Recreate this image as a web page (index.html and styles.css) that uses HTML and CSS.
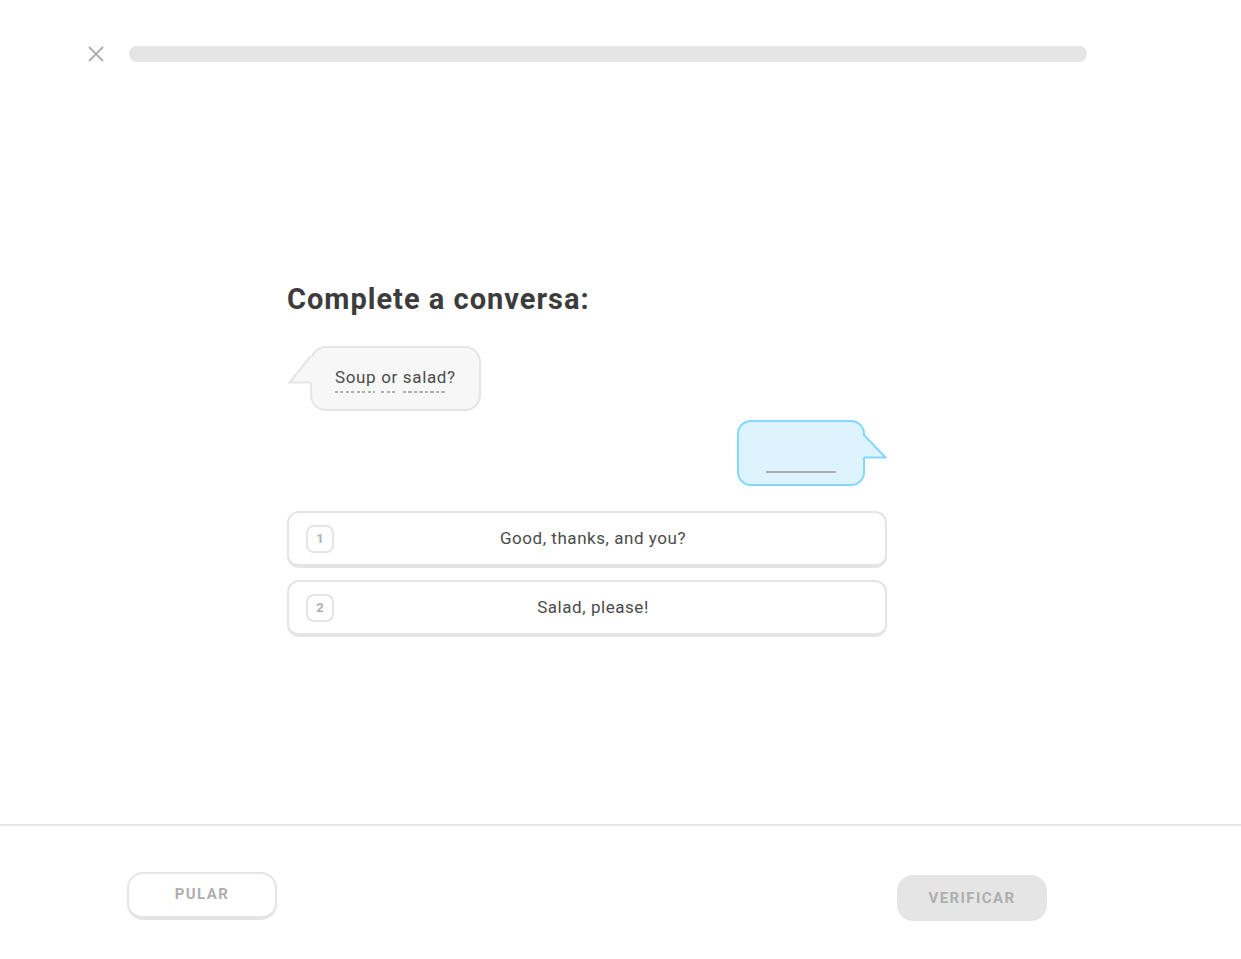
FILE: index.html
```html
<!DOCTYPE html>
<html lang="pt">
<head>
<meta charset="utf-8">
<title>Complete a conversa</title>
<link rel="stylesheet" href="styles.css">
</head>
<body>
<div class="app">
  <header class="topbar">
    <div class="frame">
      <div class="topbar-inner">
        <button class="close" aria-label="Fechar">
          <svg width="16" height="16" viewBox="0 0 16 16"><path d="M1 1L15 15M15 1L1 15" stroke="#afafaf" stroke-width="2" fill="none"/></svg>
        </button>
        <div class="progress"></div>
      </div>
    </div>
  </header>

  <main class="lesson">
    <div class="frame">
      <div class="challenge">
        <h1 class="title">Complete a conversa:</h1>

        <div class="dialog">
          <div class="row row-left">
            <div class="bubble bubble-left">
              <svg class="tail tail-left" width="26" height="30" viewBox="0 0 26 30">
                <path d="M26 2L22 2L1.5 27.5L26 27.5Z" fill="#f7f7f7"/>
                <path d="M22.5 1.5L1.5 27.5L23 27.5" fill="none" stroke="#e5e5e5" stroke-width="2"/>
              </svg>
              <span class="word">Soup</span> <span class="word">or</span> <span class="word">salad</span>?
            </div>
          </div>
          <div class="row row-right">
            <div class="bubble bubble-right">
              <span class="blank"></span>
              <svg class="tail tail-right" width="26" height="26" viewBox="0 0 26 26">
                <path d="M0 2L4 2L24.5 23.5L0 23.5Z" fill="#ddf4ff"/>
                <path d="M3.5 1.5L24.5 23.5L3 23.5" fill="none" stroke="#84d8ff" stroke-width="2"/>
              </svg>
            </div>
          </div>
        </div>

        <div class="choices">
          <div class="choice">
            <span class="key">1</span>
            <span class="choice-text">Good, thanks, and you?</span>
          </div>
          <div class="choice">
            <span class="key">2</span>
            <span class="choice-text">Salad, please!</span>
          </div>
        </div>
      </div>
    </div>
  </main>

  <footer class="footer">
    <div class="frame">
      <div class="footer-inner">
        <button class="btn btn-skip">PULAR</button>
        <button class="btn btn-check">VERIFICAR</button>
      </div>
    </div>
  </footer>
</div>
</body>
</html>
```

FILE: styles.css
```css
* {
  box-sizing: border-box;
}

html,
body {
  margin: 0;
  padding: 0;
  background: #ffffff;
}

body {
  font-family: Roboto, "Noto Sans", "Liberation Sans", sans-serif;
  color: #4b4b4b;
}

.app {
  min-height: 100vh;
  display: flex;
  flex-direction: column;
}

.frame {
  width: 1174px;
}

/* Top bar */
.topbar-inner {
  width: 1000px;
  margin: 0 auto;
  padding-top: 46px;
  display: flex;
  align-items: center;
  gap: 24px;
}

.close {
  width: 18px;
  height: 16px;
  padding: 0;
  border: 0;
  background: none;
  display: flex;
  align-items: center;
  justify-content: center;
  cursor: pointer;
}

.progress {
  flex: 1;
  height: 16px;
  border-radius: 8px;
  background: #e5e5e5;
}

/* Main lesson */
.lesson {
  flex: 1;
}

.challenge {
  width: 600px;
  margin: 0 auto;
  padding-top: 220px;
}

.title {
  margin: 0;
  font-size: 29px;
  line-height: 34px;
  font-weight: 700;
  letter-spacing: 1px;
  color: #3c3c3c;
}

.dialog {
  margin-top: 30px;
  display: flex;
  flex-direction: column;
  gap: 9px;
}

.row {
  display: flex;
}

.row-left {
  justify-content: flex-start;
  padding-left: 23px;
}

.row-right {
  justify-content: flex-end;
  padding-right: 22px;
}

.bubble {
  position: relative;
  border: 2px solid;
}

.bubble-left {
  background: #f7f7f7;
  border-color: #e5e5e5;
  border-radius: 16px;
  padding: 17px 23px 16px;
  font-size: 17px;
  line-height: 24px;
  letter-spacing: 0.65px;
  color: #4b4b4b;
}

.word {
  display: inline-block;
  padding-bottom: 4px;
  background-image: repeating-linear-gradient(to right, #afafaf 0 3px, transparent 3px 5.5px);
  background-size: calc(100% - 1px) 2px;
  background-position: left bottom;
  background-repeat: no-repeat;
}

.bubble-right {
  background: #ddf4ff;
  border-color: #84d8ff;
  border-radius: 14px;
  padding: 49px 27px 11px;
}

.blank {
  display: block;
  width: 70px;
  height: 2px;
  background: #afafaf;
}

.tail {
  position: absolute;
  display: block;
}

.tail-left {
  left: -24px;
  top: 7px;
}

.tail-right {
  right: -24px;
  top: 12px;
}

/* Choices */
.choices {
  margin-top: 25px;
  display: flex;
  flex-direction: column;
  gap: 12px;
}

.choice {
  height: 57px;
  display: flex;
  align-items: center;
  border: 2px solid #e5e5e5;
  border-bottom-width: 4px;
  border-radius: 12px;
  padding: 0 33px 0 17px;
  background: #ffffff;
  cursor: pointer;
}

.key {
  width: 28px;
  height: 28px;
  flex: none;
  display: flex;
  align-items: center;
  justify-content: center;
  border: 2px solid #e5e5e5;
  border-radius: 8px;
  font-size: 13px;
  font-weight: 700;
  color: #afafaf;
}

.choice-text {
  flex: 1;
  text-align: center;
  font-size: 17px;
  line-height: 24px;
  letter-spacing: 0.55px;
  color: #4b4b4b;
  margin-top: -2px;
}

/* Footer */
.footer {
  height: 135px;
  border-top: 2px solid #e5e5e5;
}

.footer-inner {
  width: 920px;
  margin: 0 auto;
  padding-top: 46px;
  display: flex;
  justify-content: space-between;
  align-items: flex-start;
}

.btn {
  width: 150px;
  font-family: Roboto, "Noto Sans", sans-serif;
  font-size: 15px;
  font-weight: 700;
  letter-spacing: 1.4px;
  color: #afafaf;
  border-radius: 16px;
  cursor: pointer;
}

.btn-skip {
  height: 48px;
  background: #ffffff;
  border: 2px solid #e5e5e5;
  border-bottom-width: 4px;
  padding-bottom: 3px;
}

.btn-check {
  height: 46px;
  margin-top: 3px;
  background: #e5e5e5;
  border: 0;
}
```
